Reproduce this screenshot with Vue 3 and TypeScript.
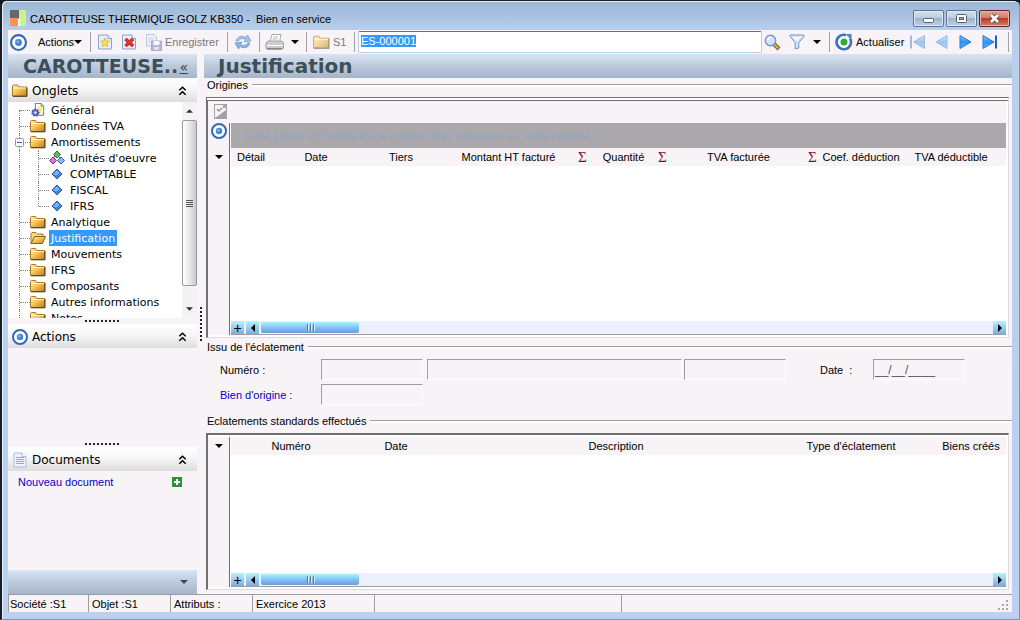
<script setup lang="ts">
import { onMounted, ref } from 'vue'

interface TreeItem {
  label: string
  icon: 'page' | 'folder' | 'open' | 'units' | 'diamond'
  level: number
  selected?: boolean
  expandable?: boolean
  last?: boolean
}

interface Column {
  label: string
  width: number | null
  sum?: boolean
}

const tree: TreeItem[] = [
  { label: 'Général', icon: 'page', level: 0 },
  { label: 'Données TVA', icon: 'folder', level: 0 },
  { label: 'Amortissements', icon: 'folder', level: 0, expandable: true },
  { label: "Unités d'oeuvre", icon: 'units', level: 1 },
  { label: 'COMPTABLE', icon: 'diamond', level: 1 },
  { label: 'FISCAL', icon: 'diamond', level: 1 },
  { label: 'IFRS', icon: 'diamond', level: 1, last: true },
  { label: 'Analytique', icon: 'folder', level: 0 },
  { label: 'Justification', icon: 'open', level: 0, selected: true },
  { label: 'Mouvements', icon: 'folder', level: 0 },
  { label: 'IFRS', icon: 'folder', level: 0 },
  { label: 'Composants', icon: 'folder', level: 0 },
  { label: 'Autres informations', icon: 'folder', level: 0 },
  { label: 'Notes', icon: 'folder', level: 0 },
]

const origins: Column[] = [
  { label: 'Détail', width: 40 },
  { label: 'Date', width: 90 },
  { label: 'Tiers', width: 80 },
  { label: 'Montant HT facturé', width: 150, sum: true },
  { label: 'Quantité', width: 80, sum: true },
  { label: 'TVA facturée', width: 150, sum: true },
  { label: 'Coef. déduction', width: 80 },
  { label: 'TVA déductible', width: null },
]

const splits: Column[] = [
  { label: 'Numéro', width: 120 },
  { label: 'Date', width: 90 },
  { label: 'Description', width: 350 },
  { label: "Type d'éclatement", width: 120 },
  { label: 'Biens créés', width: 120 },
]

const status = ['Société :S1', 'Objet :S1', 'Attributs :', 'Exercice 2013', '', '']

const code = ref('ES-000001')
const codeInput = ref<HTMLInputElement | null>(null)

onMounted(() => {
  codeInput.value?.focus()
  codeInput.value?.select()
})

const colStyle = (c: Column) => (c.width ? { width: c.width + 'px' } : {})
</script>

<template>
  <div class="window">
    <svg class="defs" width="0" height="0" aria-hidden="true">
      <defs>
        <linearGradient id="gold" x1="0" y1="0" x2="1" y2="1">
          <stop offset="0" stop-color="#fff0b0" /><stop offset=".5" stop-color="#f0c050" /><stop offset="1" stop-color="#c08018" />
        </linearGradient>
        <linearGradient id="nav" x1="0" y1="0" x2="0" y2="1">
          <stop offset="0" stop-color="#8fd0ff" /><stop offset=".5" stop-color="#2f92f0" /><stop offset="1" stop-color="#56b4ff" />
        </linearGradient>
        <symbol id="target" viewBox="0 0 16 16">
          <circle cx="8" cy="8" r="7" fill="#fff" stroke="#3468b4" stroke-width="2" />
          <circle cx="8" cy="8" r="3.2" fill="#3e86dc" /><circle cx="7.3" cy="7.3" r="1.2" fill="#8fc0f5" />
        </symbol>
        <symbol id="folder" viewBox="0 0 16 14">
          <path d="M.5 12.500V2.500L1.500 1.500H5.500L7 3.500H14.500V12.500Z" fill="url(#gold)" stroke="#a5782c" />
          <path d="M1 4.500H14" stroke="#fff3c4" /><path d="M1 12.800H15V4" fill="none" stroke="#4c3712" />
        </symbol>
        <symbol id="open" viewBox="0 0 16 14">
          <path d="M1 12.500V2.500L2 1.500H6L7.500 3H13V6" fill="#f5d77d" stroke="#a5782c" />
          <path d="M1 12.500L4.500 5.500H15.500L12.500 12.500Z" fill="url(#gold)" stroke="#8a6320" />
        </symbol>
        <symbol id="page" viewBox="0 0 16 16">
          <path d="M5 .500H11.500L14.500 3.500V14H5Z" fill="#fffdf0" stroke="#686868" /><path d="M8 4H13V12H8Z" fill="#ffe88a" />
          <path d="M11.500 .500V3.500H14.500" fill="#c9d8ee" stroke="#687898" />
          <circle cx="5" cy="11" r="3.600" fill="#6d78d0" stroke="#424caa" stroke-width="2" stroke-dasharray="2 1" /><circle cx="5" cy="11" r="1.300" fill="#fff" />
        </symbol>
        <symbol id="units" viewBox="0 0 16 14">
          <path d="M6 5L4 8M9 5L12 8" stroke="#555" />
          <path d="M8 0L11.500 3.500L8 7L4.500 3.500Z" fill="#62ba62" stroke="#2e6e34" />
          <path d="M4 6L7.500 9.500L4 13L.500 9.500Z" fill="#d77bd2" stroke="#743a7b" />
          <path d="M12 6L15.500 9.500L12 13L8.500 9.500Z" fill="#8cbaf1" stroke="#33629d" />
        </symbol>
        <symbol id="diamond" viewBox="0 0 16 14">
          <path d="M8 2L13 7L8 12L3 7Z" fill="#4184dc" stroke="#2a5eae" /><path d="M8 3.500L10.500 6L7 8.500L4.500 7Z" fill="#7fb6f5" />
        </symbol>
        <symbol id="chevrons" viewBox="0 0 8 10">
          <path d="M.800 4.300L4 1.200L7.200 4.300M.800 8.800L4 5.700L7.200 8.800" fill="none" stroke="#000" stroke-width="1.500" />
        </symbol>
        <symbol id="caret" viewBox="0 0 8 4"><path d="M0 0H8L4 4Z" fill="currentColor" /></symbol>
      </defs>
    </svg>

    <header class="titlebar">
      <svg class="logo" viewBox="0 0 16 16" width="16" height="16">
        <path d="M0 0H9V8H0Z" fill="#66696a" /><path d="M9 0H16V16H9Z" fill="#c5f58c" /><path d="M0 8H9V16H0Z" fill="#fb905b" /><path d="M8 9H10V16H8Z" fill="#fff" />
      </svg>
      <h1 class="caption">CAROTTEUSE THERMIQUE GOLZ KB350 - &nbsp;Bien en service</h1>
      <div class="winbtns">
        <button type="button" class="winbtn" aria-label="Réduire">
          <svg viewBox="0 0 29 15" width="29" height="15"><rect x="9.500" y="7.500" width="10" height="4" rx="1" fill="#fff" stroke="#555d6c" /></svg>
        </button>
        <button type="button" class="winbtn" aria-label="Agrandir">
          <svg viewBox="0 0 29 15" width="29" height="15"><rect x="9.500" y="3.500" width="10" height="8" rx="1" fill="#fff" stroke="#555d6c" /><rect x="12.500" y="6.500" width="4" height="2" fill="#9cb4d0" stroke="#555d6c" /></svg>
        </button>
        <button type="button" class="winbtn close" aria-label="Fermer">
          <svg viewBox="0 0 29 15" width="29" height="15"><path d="M11 4L18 11M18 4L11 11" stroke="#59414b" stroke-width="4.400" /><path d="M11 4L18 11M18 4L11 11" stroke="#fff" stroke-width="2.600" /></svg>
        </button>
      </div>
    </header>

    <div class="client">
      <div class="toolbar">
        <button type="button" class="tool actions"><svg width="17" height="17"><use href="#target" /></svg><span>Actions</span><svg width="8" height="4"><use href="#caret" /></svg></button>
        <i class="sep"></i>
        <button type="button" class="tool icon" aria-label="Nouveau">
          <svg viewBox="0 0 14 16" width="14" height="16"><path d="M.500 1H10L13.500 4.500V15H.500Z" fill="#e5eefb" stroke="#8ba4c4" /><path d="M10 1V4.500H13.500" fill="#fff" stroke="#8ba4c4" /><path d="M7 4L8.300 7L11.500 7.300L9.100 9.400L9.800 12.500L7 10.900L4.200 12.500L4.900 9.400L2.500 7.300L5.700 7Z" fill="#ffe14a" stroke="#d1b23c" stroke-width=".8" /></svg>
        </button>
        <button type="button" class="tool icon" aria-label="Supprimer">
          <svg viewBox="0 0 14 16" width="14" height="16"><path d="M.500 1H10L13.500 4.500V15H.500Z" fill="#e5eefb" stroke="#8ba4c4" /><path d="M10 1V4.500H13.500" fill="#fff" stroke="#8ba4c4" /><path d="M3.500 5L11 12M11 5L3.500 12" stroke="#a91313" stroke-width="3.200" /><path d="M3.500 5L11 12M11 5L3.500 12" stroke="#ee3434" stroke-width="1.800" /></svg>
        </button>
        <button type="button" class="tool save" disabled>
          <svg viewBox="0 0 16 17" width="16" height="17" opacity=".55"><path d="M.500 .500H8L10.500 3V12H.500Z" fill="#eef3fc" stroke="#8ba4c4" /><path d="M2 4H8M2 6H8M2 8H6" stroke="#9fb8e0" /><path d="M5.500 7H15.500V16.500H5.500Z" fill="#8283ca" stroke="#6a6bae" /><path d="M7.500 7H13.500V11H7.500Z" fill="#fff" /><path d="M8 13H13V16H8Z" fill="#cfd3ef" /></svg>
          <span>Enregistrer</span>
        </button>
        <i class="sep"></i>
        <button type="button" class="tool sync" aria-label="Synchroniser">
          <svg viewBox="0 0 18 16" width="18" height="16"><path d="M2 7C3 2.500 8 1 12 3.500L13.500 1L17 7L10 8L11.500 5.500C8.500 4 5.500 4.500 4.500 7Z" fill="#a7c4e8" stroke="#7e9fca" stroke-width=".8" /><path d="M16 9C15 13.500 10 15 6 12.500L4.500 15L1 9L8 8L6.500 10.500C9.500 12 12.500 11.500 13.500 9Z" fill="#8db4df" stroke="#7496c4" stroke-width=".8" /></svg>
        </button>
        <i class="sep"></i>
        <button type="button" class="tool print" aria-label="Imprimer">
          <svg viewBox="0 0 20 17" width="20" height="17"><path d="M5 8L7 .500H16L14.500 8Z" fill="#fff" stroke="#aaa" /><path d="M8 3H13M7.500 5H12.500" stroke="#bbb" /><path d="M1 9L3 7H17L18.500 9V14L17 15.500H2L1 14Z" fill="#ccc" stroke="#a3a3a3" /><path d="M2 11.500H17.500" stroke="#fff" /><path d="M2 14.500H17" stroke="#888" /></svg>
          <svg width="8" height="4"><use href="#caret" /></svg>
        </button>
        <i class="sep"></i>
        <button type="button" class="tool site" disabled><svg width="17" height="16" opacity=".55"><use href="#folder" /></svg><span>S1</span></button>
        <i class="sep"></i>
        <input ref="codeInput" v-model="code" class="code" type="text" aria-label="Code du bien" spellcheck="false">
        <button type="button" class="tool search" aria-label="Rechercher">
          <svg viewBox="0 0 17 17" width="17" height="17"><path d="M10 10L15 15" stroke="#7c5b20" stroke-width="4" /><path d="M10.500 10.500L14.500 14.500" stroke="#e5b04a" stroke-width="2" /><circle cx="6.500" cy="6.500" r="5.200" fill="#cfe5ff" stroke="#7992c4" stroke-width="1.400" /><path d="M3.500 6C4 4 5.500 3.500 7 3.500" fill="none" stroke="#fff" stroke-width="1.500" /></svg>
        </button>
        <button type="button" class="tool filter" aria-label="Filtrer">
          <svg viewBox="0 0 16 16" width="16" height="16"><path d="M1 1H15V2.500L9.800 8.500V14L6.200 15V8.500L1 2.500Z" fill="#d5e4f8" stroke="#7893bd" /><path d="M4 3H12L8 7Z" fill="#f5f9ff" /></svg>
          <svg width="8" height="4"><use href="#caret" /></svg>
        </button>
        <i class="sep"></i>
        <button type="button" class="tool refresh">
          <svg viewBox="0 0 18 18" width="18" height="18"><circle cx="9" cy="9" r="6.500" fill="#fff" /><path d="M15 5.500A7.200 7.200 0 1 1 11 2.200" fill="none" stroke="#3d72bc" stroke-width="2.600" /><path d="M10.500 1H16.500V7Z" fill="#4b83cf" /><circle cx="9" cy="9" r="3.500" fill="#31ac38" /></svg>
          <span>Actualiser</span>
        </button>
        <nav class="records" aria-label="Navigation">
          <button type="button" class="tool rec" disabled aria-label="Premier"><svg viewBox="0 0 15 14" width="15" height="14"><path d="M14.500 .500V13.500L3.500 7Z" fill="url(#nav)" stroke="#2c7ad4" /><path d="M1 .500V13.500" stroke="#2c7ad4" stroke-width="2" /></svg></button>
          <button type="button" class="tool rec" disabled aria-label="Précédent"><svg viewBox="0 0 15 14" width="15" height="14"><path d="M13 .500V13.500L2 7Z" fill="url(#nav)" stroke="#2c7ad4" /></svg></button>
          <button type="button" class="tool rec" aria-label="Suivant"><svg viewBox="0 0 15 14" width="15" height="14"><path d="M2 .500V13.500L13 7Z" fill="url(#nav)" stroke="#2377dc" /></svg></button>
          <button type="button" class="tool rec" aria-label="Dernier"><svg viewBox="0 0 15 14" width="15" height="14"><path d="M1 .500V13.500L12 7Z" fill="url(#nav)" stroke="#2377dc" /><path d="M14 .500V13.500" stroke="#1361c4" stroke-width="2" /></svg></button>
        </nav>
        <i class="sep"></i>
      </div>

      <div class="body">
        <aside class="sidebar">
          <div class="band side-band">
            <h2>CAROTTEUSE..</h2>
            <button type="button" class="collapse" aria-label="Replier">«</button>
          </div>

          <section class="pane">
            <h3 class="pane-head"><svg width="16" height="15"><use href="#folder" /></svg><span>Onglets</span><button type="button" class="fold" aria-label="Replier Onglets"><svg width="9" height="10"><use href="#chevrons" /></svg></button></h3>
            <div class="tree-wrap">
              <ul class="tree">
                <li v-for="(item, i) in tree" :key="i" :class="['node', 'level' + item.level, { first: i === 0, last: item.last }]">
                  <span v-if="item.level" class="branch"></span>
                  <button v-if="item.expandable" type="button" class="expander" aria-label="Réduire la branche"><svg viewBox="0 0 9 9" width="9" height="9"><rect x=".5" y=".5" width="8" height="8" rx="1" fill="#f7f7f7" stroke="#8b97a8" /><path d="M2 4.500H7" stroke="#3b56a5" /></svg></button>
                  <svg width="16" height="14"><use :href="'#' + item.icon" /></svg>
                  <span :class="['node-label', { selected: item.selected }]">{{ item.label }}</span>
                </li>
              </ul>
              <div class="vscroll">
                <button type="button" aria-label="Défiler vers le haut"><svg class="up" width="7" height="4"><use href="#caret" /></svg></button>
                <div class="vthumb"><i></i><i></i><i></i><i></i></div>
                <button type="button" aria-label="Défiler vers le bas"><svg width="7" height="4"><use href="#caret" /></svg></button>
              </div>
            </div>
          </section>

          <div class="hgrip"><i></i></div>
          <section class="pane actions-pane">
            <h3 class="pane-head"><svg width="16" height="16"><use href="#target" /></svg><span>Actions</span><button type="button" class="fold" aria-label="Replier Actions"><svg width="9" height="10"><use href="#chevrons" /></svg></button></h3>
          </section>

          <div class="hgrip"><i></i></div>
          <section class="pane docs-pane">
            <h3 class="pane-head">
              <svg viewBox="0 0 16 16" width="16" height="16"><path d="M2 1H10L14 4.500V15H2Z" fill="#eef4ff" stroke="#a9bbdf" /><path d="M4 5.500H12M4 7.500H12M4 9.500H12M4 11.500H12" stroke="#8facdf" /><path d="M10 1V4.500H14" fill="#fff" stroke="#a9bbdf" /></svg>
              <span>Documents</span><button type="button" class="fold" aria-label="Replier Documents"><svg width="9" height="10"><use href="#chevrons" /></svg></button>
            </h3>
            <div class="new-doc">
              <a href="#">Nouveau document</a>
              <button type="button" aria-label="Ajouter un document"><svg viewBox="0 0 10 10" width="10" height="10"><rect width="10" height="10" fill="#2d9333" /><path d="M5 2V8M2 5H8" stroke="#fff" stroke-width="2" /></svg></button>
            </div>
          </section>
          <div class="band side-foot"><button type="button" aria-label="Plus de volets"><svg width="8" height="4"><use href="#caret" /></svg></button></div>
        </aside>

        <div class="vgrip"><i></i></div>

        <main class="content">
          <div class="band main-band"><h2>Justification</h2></div>

          <section class="group origins">
            <h3 class="legend">Origines</h3>
            <div class="grid">
              <div class="grid-tools">
                <button type="button" disabled aria-label="Détail de la ligne"><svg viewBox="0 0 13 15" width="13" height="15"><rect width="13" height="15" fill="#a3a1a3" /><path d="M1 1H9L12 4V6L4 12L1 14Z" fill="#f5f3f5" /><path d="M9 1V4H12" fill="#a3a1a3" /><path d="M3 5L5 7L8 4" fill="none" stroke="#999" stroke-width="1.500" /></svg></button>
              </div>
              <div class="grid-main">
                <div class="gutter"><button type="button" class="gutter-target" aria-label="Actions de la grille"><svg width="16" height="16"><use href="#target" /></svg></button><button type="button" class="gutter-menu" aria-label="Menu des colonnes"><svg width="8" height="4"><use href="#caret" /></svg></button></div>
                <div class="grid-data">
                  <p class="group-hint">Faire glisser ici l'entête d'une colonne pour regrouper sur cette colonne.</p>
                  <div class="grid-view">
                    <table class="with-sums">
                      <thead>
                        <tr>
                          <th v-for="c in origins" :key="c.label" :style="colStyle(c)"><span class="th"><span>{{ c.label }}</span><b v-if="c.sum">Σ</b></span></th>
                        </tr>
                      </thead>
                    </table>
                  </div>
                  <div class="hscroll">
                    <button type="button" aria-label="Ajouter">+</button>
                    <button type="button" aria-label="Défiler à gauche"><svg viewBox="0 0 4 8" width="4" height="8"><path d="M4 0V8L0 4Z" /></svg></button>
                    <div class="htrack"><div class="hthumb"><i></i><i></i><i></i></div></div>
                    <button type="button" aria-label="Défiler à droite"><svg viewBox="0 0 4 8" width="4" height="8"><path d="M0 0V8L4 4Z" /></svg></button>
                  </div>
                </div>
              </div>
            </div>
          </section>

          <section class="group source">
            <h3 class="legend">Issu de l'éclatement</h3>
            <div class="form">
              <div class="row">
                <label class="lbl" for="num">Numéro :</label>
                <input id="num" class="short" type="text" readonly>
                <input class="long" type="text" readonly aria-label="Libellé">
                <input class="short" type="text" readonly aria-label="Complément">
                <label class="date-lbl" for="date">Date &nbsp;:</label>
                <input id="date" class="date" type="text" readonly value="__/__/____">
              </div>
              <div class="row">
                <label class="lbl link" for="orig">Bien d'origine :</label>
                <input id="orig" class="short" type="text" readonly>
              </div>
            </div>
          </section>

          <section class="group splits">
            <h3 class="legend">Eclatements standards effectués</h3>
            <div class="grid">
              <div class="grid-main">
                <div class="gutter"><button type="button" class="gutter-menu" aria-label="Menu des colonnes"><svg width="8" height="4"><use href="#caret" /></svg></button></div>
                <div class="grid-data">
                  <div class="grid-view">
                    <table>
                      <thead>
                        <tr><th v-for="c in splits" :key="c.label" :style="colStyle(c)">{{ c.label }}</th></tr>
                      </thead>
                    </table>
                  </div>
                  <div class="hscroll">
                    <button type="button" aria-label="Ajouter">+</button>
                    <button type="button" aria-label="Défiler à gauche"><svg viewBox="0 0 4 8" width="4" height="8"><path d="M4 0V8L0 4Z" /></svg></button>
                    <div class="htrack"><div class="hthumb"><i></i><i></i><i></i></div></div>
                    <button type="button" aria-label="Défiler à droite"><svg viewBox="0 0 4 8" width="4" height="8"><path d="M0 0V8L4 4Z" /></svg></button>
                  </div>
                </div>
              </div>
            </div>
          </section>
        </main>
      </div>

      <footer class="statusbar">
        <span v-for="(s, i) in status" :key="i" :class="'cell cell' + i">{{ s }}</span>
        <svg class="grip" viewBox="0 0 11 11" width="11" height="11"><path d="M8 0h2v2h-2zM4 4h2v2h-2zM8 4h2v2h-2zM0 8h2v2h-2zM4 8h2v2h-2zM8 8h2v2h-2z" fill="#a9a6aa" /></svg>
      </footer>
    </div>
  </div>
</template>

<style>
body { margin: 0; background: #101820; }
</style>

<style scoped>
* { box-sizing: border-box; }
.window { display: flex; flex-direction: column; min-height: 100vh; padding: 0 7px 7px 6px; border: 1px solid #15202b; border-right-color: #35b6cf; border-bottom-color: #35b6cf; border-left-width: 2px; border-radius: 6px 6px 0 0; background: linear-gradient(#9ab4d3, #b9d0ed 30px, #bad1ef); font-family: "Liberation Sans", Arial, sans-serif; font-size: 11px; line-height: 14px; color: #000; box-shadow: inset 1px 1px #e5eef9; }
.defs { position: absolute; }
button { border: 0; padding: 0; background: none; font: inherit; color: inherit; }
svg { display: block; flex: none; }
h1, h2, h3, p, ul { margin: 0; padding: 0; font-weight: normal; font-size: 11px; }
input { font: inherit; }

.titlebar { display: flex; align-items: center; height: 29px; padding: 5px 2px 0; }
.caption { flex: 1; margin-left: 4px; line-height: 16px; padding-top: 1px; white-space: nowrap; }
.winbtns { display: flex; gap: 2px; }
.winbtn { height: 17px; border: 1px solid #5f7490; border-radius: 2px; background: linear-gradient(#d3e0ef, #bccde1 48%, #9db4cf 50%, #bdd1e8); box-shadow: inset 0 0 0 1px #dce8f5; }
.winbtn.close { border-color: #5b2630; background: linear-gradient(#e6a493, #d37a67 48%, #bd3a24 50%, #d3806a); box-shadow: inset 0 0 0 1px #e9b4a6; }

.client { flex: 1; display: flex; flex-direction: column; background: #f7f3f7; }
.toolbar { display: flex; align-items: center; height: 24px; padding: 0 3px 0 2px; }
.sep { width: 1px; height: 20px; background: #a5a2a5; }
.tool { display: flex; align-items: center; height: 22px; white-space: nowrap; }
.actions { width: 80px; }
.actions span { margin-left: 11px; }
.icon { width: 24px; }
.sep + .icon { margin-left: 7px; }
.save { width: 81px; gap: 3px; color: #777; }
.sync { width: 31px; padding-left: 6px; }
.print { width: 46px; padding-left: 5px; gap: 6px; }
.site { width: 47px; padding-left: 6px; gap: 3px; color: #777; }
.code { flex: 1; min-width: 0; height: 22px; margin-left: 3px; padding: 0 1px 2px 2px; border: 1px solid #b5cfe7; border-top-color: #3d7bad; border-radius: 2px; background: #fff; outline: 0; }
.code::selection { background: #3399ff; color: #fff; }
.search { width: 27px; padding-left: 2px; }
.filter { width: 40px; gap: 8px; }
.refresh { width: 80px; padding-left: 5px; gap: 3px; }
.records { display: flex; width: 98px; gap: 9px; }
.rec:disabled { opacity: .45; }

.body { flex: 1; display: flex; }
.band { display: flex; align-items: center; height: 24px; background: linear-gradient(#d9e4f4, #bccada 50%, #a5b6ca); }
.band h2 { font: bold 19px/24px "DejaVu Sans", Verdana, sans-serif; color: #3d4f59; padding-left: 14px; white-space: nowrap; }
.main-band h2 { font-size: 20px; }
.sidebar { display: flex; flex-direction: column; width: 189px; }
.side-band h2 { flex: 1; padding-left: 15px; }
.collapse { padding: 2px 9px 0 0; font: 14px/16px "DejaVu Sans", sans-serif; color: #33444f; text-decoration: underline; }
.pane-head { display: flex; align-items: center; height: 24px; padding: 1px 10px 0 4px; gap: 4px; background: linear-gradient(#fff, #f7f6f7 45%, #deddde); font: 12px/20px "DejaVu Sans", Verdana, sans-serif; }
.fold { margin-left: auto; }
.tree-wrap { display: flex; height: 216px; overflow: hidden; background: #fff; }
.tree { flex: 1; list-style: none; overflow: hidden; font: 11px/14px "DejaVu Sans", Verdana, sans-serif; }
.node { position: relative; display: flex; align-items: center; height: 16px; padding-left: 22px; white-space: nowrap; }
.level1 { padding-left: 41px; }
.node::before { content: ""; position: absolute; left: 11px; top: 0; height: 16px; border-left: 1px dotted #888; }
.node.first::before { top: 8px; height: 8px; }
.level0::after { content: ""; position: absolute; left: 12px; top: 8px; width: 10px; border-top: 1px dotted #888; }
.branch { position: absolute; left: 30px; top: 0; width: 11px; height: 16px; border-left: 1px dotted #888; }
.branch::after { content: ""; position: absolute; left: 0; top: 8px; width: 10px; border-top: 1px dotted #888; }
.last .branch { height: 8px; }
.expander { position: absolute; left: 7px; top: 4px; z-index: 1; }
.node-label { margin-left: 3px; padding: 2px 2px 0; }
.node-label.selected { background: #3399ff; color: #fff; }
.vscroll { display: flex; flex-direction: column; width: 15px; background: #f4f2f4; }
.vscroll button { display: grid; place-items: center; height: 18px; color: #333; }
.vscroll .up { transform: rotate(180deg); }
.vthumb { flex: none; display: flex; flex-direction: column; align-items: center; justify-content: center; gap: 1px; height: 166px; margin-bottom: 14px; border: 1px solid #999; border-radius: 2px; background: linear-gradient(90deg, #fff, #e9e8ea 50%, #c9c8cc); }
.vthumb i { width: 7px; height: 1px; background: #555; }
.hgrip { display: grid; place-items: center; height: 6px; }
.hgrip i { width: 35px; height: 2px; background: repeating-linear-gradient(90deg, #222 0 2px, transparent 2px 4px); }
.actions-pane { height: 117px; }
.docs-pane { flex: 1; }
.new-doc { display: flex; align-items: center; justify-content: space-between; height: 22px; padding: 0 15px 0 10px; }
.new-doc a { color: #0a00c8; text-decoration: none; }
.side-foot { justify-content: flex-end; padding-right: 9px; color: #39485a; }
.vgrip { display: grid; place-items: center; width: 7px; }
.vgrip i { width: 2px; height: 35px; background: repeating-linear-gradient(#222 0 2px, transparent 2px 4px); }

.content { flex: 1; min-width: 0; display: flex; flex-direction: column; }
.group { display: flex; flex-direction: column; }
.legend { display: flex; align-items: center; gap: 4px; height: 14px; padding-left: 3px; white-space: nowrap; }
.legend::after { content: ""; flex: 1; height: 2px; border-top: 1px solid #a09da0; background: #fff; }
.grid { flex: 1; display: flex; flex-direction: column; margin: 5px 3px 0 2px; padding: 2px 2px 2px 0; border: 2px solid #717071; border-right: 1px solid #dedbde; border-bottom: 1px solid #dedbde; background: #fff; }
.grid-tools { height: 22px; padding: 3px 0 0 6px; background: #f7f3f7; }
.grid-main { flex: 1; display: flex; }
.gutter { display: flex; flex-direction: column; align-items: center; width: 22px; border-right: 1px solid #717071; background: #f7f3f7; }
.gutter-target { display: flex; height: 25px; }
.gutter-menu { display: grid; place-items: center; width: 14px; height: 18px; }
.grid-data { flex: 1; min-width: 0; display: flex; flex-direction: column; margin-left: 1px; border-bottom: 1px solid #a09da0; }
.group-hint { height: 25px; padding-left: 14px; background: #aaa8aa; color: #90a6c1; line-height: 26px; white-space: nowrap; overflow: hidden; }
.grid-view { flex: 1; overflow: hidden; }
table { width: 100%; border-collapse: collapse; table-layout: fixed; background: #f7f3f7; }
th { height: 18px; padding: 0; font-weight: normal; line-height: 16px; white-space: nowrap; }
.with-sums th:last-child { padding-right: 5px; }
.th { display: flex; align-items: center; }
.th > span { flex: 1; }
.th b { width: 15px; padding-left: 2px; color: #8b0a1a; font: 15px/16px "Liberation Serif", serif; text-align: left; }
.hscroll { display: flex; align-items: center; gap: 2px; height: 13px; background: #ecf1fd; }
.hscroll button { display: grid; place-items: center; width: 13px; height: 13px; background: linear-gradient(#b8f0fd, #7aaee0); font-size: 14px; line-height: 12px; }
.htrack { flex: 1; }
.hthumb { display: flex; align-items: center; justify-content: center; gap: 2px; width: 98px; height: 11px; border-radius: 2px; background: linear-gradient(#a2f5fd, #7ebaf0 60%, #6d9ddb); }
.hthumb i { width: 1px; height: 7px; background: #5475a5; box-shadow: 1px 0 #d8f0ff; }
.form { display: flex; flex-direction: column; gap: 4px; padding: 5px 0 9px 16px; }
.row { display: flex; align-items: center; height: 21px; }
.row input { height: 21px; min-width: 0; padding: 0 1px; border: 1px solid #fff; border-top-color: #a09da0; border-left-color: #a09da0; background: #f7f3f7; color: #555; outline: 0; }
.lbl { width: 101px; }
.link { color: #0a00c8; }
.short { width: 102px; }
.long { width: 255px; margin: 0 2px 0 4px; }
.date-lbl { width: 87px; padding-left: 34px; }
.row .date { width: 92px; font-size: 12px; }
.origins { flex: 260; }
.origins .grid { padding-top: 0; border-top-width: 4px; border-top-style: double; }
.source { padding-top: 2px; }
.splits { flex: 180; }
.splits .grid { margin-bottom: 4px; }

.statusbar { display: flex; height: 18px; border-top: 1px solid #a09da0; line-height: 18px; }
.cell { padding-left: 3px; border-left: 1px solid #a09da0; white-space: nowrap; overflow: hidden; }
.cell0 { width: 80px; padding-left: 1px; }
.cell1, .cell2 { width: 82px; }
.cell3 { width: 122px; }
.cell4 { width: 247px; }
.cell5 { flex: 1; }
.grip { align-self: flex-end; margin: 0 3px 1px 0; }
</style>
